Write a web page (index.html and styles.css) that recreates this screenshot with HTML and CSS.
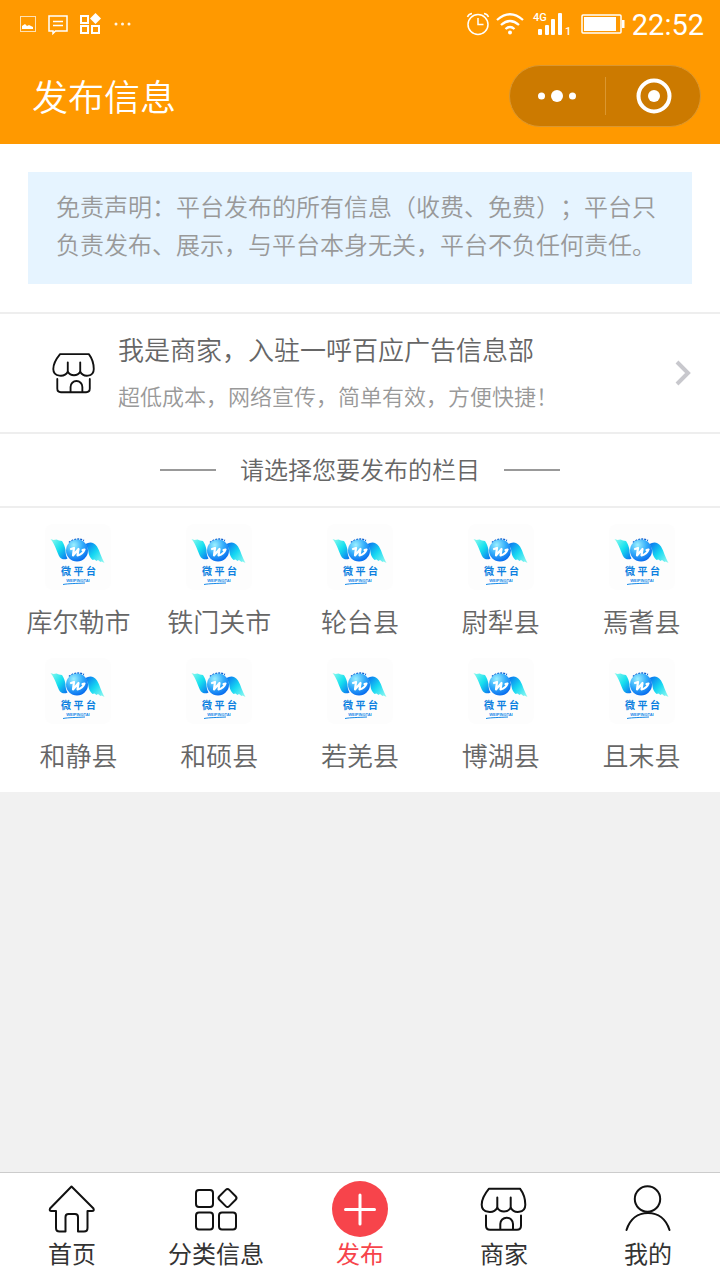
FILE: index.html
```html
<!DOCTYPE html>
<html lang="zh-CN">
  <head>
    <meta charset="UTF-8" />
    <meta name="viewport" content="width=device-width, initial-scale=1" />
    <title>发布信息</title>
    <link rel="stylesheet" href="styles.css">
  </head>
  <body>
    <svg class="sprite" width="0" height="0" aria-hidden="true">
      <defs>
        <radialGradient id="ball" cx="0.35" cy="0.25" r="0.8">
          <stop offset="0" stop-color="#9cf0ff" />
          <stop offset="0.5" stop-color="#35aefb" />
          <stop offset="1" stop-color="#0468ee" />
        </radialGradient>
        <linearGradient id="wing-left" x1="0" y1="0" x2="1" y2="1">
          <stop offset="0" stop-color="#8ffbee" />
          <stop offset="0.5" stop-color="#16e0ee" />
          <stop offset="1" stop-color="#0a6cf0" />
        </linearGradient>
        <linearGradient id="wing-right" x1="0" y1="0" x2="1" y2="1">
          <stop offset="0" stop-color="#0a6cf0" />
          <stop offset="0.5" stop-color="#16d8f2" />
          <stop offset="1" stop-color="#9cfbf0" />
        </linearGradient>
      </defs>
      <symbol id="logo" viewBox="0 0 66 66">
        <path fill="url(#wing-left)" d="M5.500 15l3 1 3-.5 2.500 1 3 .5c2 3 3 6 3.500 9 0 3 .5 6 2 8.500-2.500 1.500-5.500 1-7.500-1C12 29 10.500 21 5.500 15z" />
        <path fill="url(#wing-right)" d="M40.500 20c4-2.500 8.500-2 11.500 2.500 3 5 4 10.500 7.500 16.500l-3-1.500-1 .5-2.500-2-1.500 1-2-1.500-2 .5c-3.500-3-4-7-4.500-11z" />
        <path fill="none" stroke="#0b5fd0" stroke-width="1.500" stroke-dasharray="2 1" d="M24 18.500c4-3.500 10-4.500 15-2" />
        <circle cx="32" cy="26.500" r="11" fill="url(#ball)" />
        <path fill="none" stroke="#fff" stroke-width="2.200" stroke-linecap="round" stroke-linejoin="round" d="M26 25l3-1-1 7.500 5.500-6.500-1 6.500c4-1 6-3 7-6l-2 .5" />
        <text class="logo-name" x="16 28.500 41" y="51">微平台</text>
        <text class="logo-sub" x="33" y="58" text-anchor="middle">WEIPINGTAI</text>
        <path fill="none" stroke="#1689e8" d="M18 60.500c5-1 14-1 22-1.500" />
      </symbol>
      <symbol id="shop" viewBox="0 0 56 56">
        <path d="M13 7.700h31c3 4 5.300 9 5.300 16 0 9-11.500 9-14.600 3-3 5-10.400 5-13.400 0-3.100 6-15.600 6-15.600-3 0-7 4-12 7.300-16z" />
        <path d="M21.300 16.500v10M34.700 16.500v10M10 34.500v10.200q0 4 4 4h27q4 0 4-4V34.500M24.300 48.500V43a6.300 6.300 0 0 1 12.700 0v5.500" />
      </symbol>
    </svg>

    <header class="header">
      <div class="status">
        <svg class="status-icon" width="18" height="24" viewBox="0 0 18 24">
          <rect x="2.500" y="4.500" width="15" height="15" fill="none" stroke="#fff" stroke-opacity="0.7" />
          <path fill="#fff" d="M4 17v-3l3-2 2 2 2-1 4 2v2z" />
        </svg>
        <svg class="status-icon" width="20" height="24" viewBox="0 0 20 24">
          <path fill="none" stroke="#fff" stroke-width="1.500" d="M1 4h18v15H7.500L5 21.500V19H1zM5 9.500h10M5 13.500h10" />
        </svg>
        <svg class="status-icon" width="22" height="24" viewBox="0 0 22 24">
          <path fill="none" stroke="#fff" stroke-width="2" d="M1 4h7v7H1zM1 14h7v7H1zM12 14h7v7h-7z" />
          <path fill="#fff" d="M15.500 1l5.500 5.500-5.500 5.500L10 6.500z" />
        </svg>
        <svg class="status-icon" width="18" height="24" viewBox="0 0 18 24">
          <g fill="#fff" fill-opacity="0.9">
            <circle cx="2" cy="12" r="1.500" />
            <circle cx="8.500" cy="12" r="1.500" />
            <circle cx="15" cy="12" r="1.500" />
          </g>
        </svg>

        <div class="status-right">
          <svg width="24" height="24" viewBox="0 0 24 24" fill="none" stroke="#fff" stroke-width="1.500">
            <circle cx="12" cy="12.500" r="10" />
            <path d="M12 6v6.500h5.500M1.500 5q1-3 4.500-3.500M22.500 5q-1-3-4.500-3.500" />
          </svg>
          <svg width="28" height="24" viewBox="0 0 28 24" fill="none" stroke="#fff" stroke-width="2.300">
            <path d="M1 8q13-11.500 26 0M5 13q9-8 18 0M9.500 17q4.500-4 9 0" />
            <circle cx="14" cy="20.500" r="2" fill="#fff" stroke="none" />
          </svg>
          <svg class="signal" width="40" height="24" viewBox="0 0 40 24" fill="#fff">
            <text x="1" y="9">4G</text>
            <rect x="6" y="17" width="4" height="6" rx="1" />
            <rect x="13" y="13" width="4" height="10" rx="1" />
            <rect x="19" y="7" width="4" height="16" rx="1" />
            <rect x="26" y="1" width="4" height="22" rx="1" />
            <text x="33" y="23">1</text>
          </svg>
          <svg width="44" height="24" viewBox="0 0 44 24">
            <rect x="2" y="3" width="39" height="18" rx="1" fill="none" stroke="#fff" stroke-width="1.500" />
            <path fill="#fff" d="M4 5h32v14H4zM42 8h2.500v8H42z" />
          </svg>
          <span class="time">22:52</span>
        </div>
      </div>

      <div class="titlebar">
        <h1>发布信息</h1>
        <div class="capsule">
          <button type="button" aria-label="更多">
            <svg width="40" height="40" viewBox="0 0 40 40" fill="#fff">
              <circle cx="4.500" cy="20" r="3.500" />
              <circle cx="20" cy="20" r="6" />
              <circle cx="35.500" cy="20" r="3.500" />
            </svg>
          </button>
          <button type="button" aria-label="关闭">
            <svg width="40" height="40" viewBox="0 0 40 40" fill="#fff">
              <circle cx="21" cy="20" r="15.500" fill="none" stroke="#fff" stroke-width="4" />
              <circle cx="21" cy="20" r="6" />
            </svg>
          </button>
        </div>
      </div>
    </header>

    <main>
      <p class="notice">免责声明：平台发布的所有信息（收费、免费）；平台只负责发布、展示，与平台本身无关，平台不负任何责任。</p>

      <a class="merchant" href="#join">
        <svg class="line-icon" width="52" height="52"><use href="#shop" /></svg>
        <span class="merchant-text">
          <span class="merchant-title">我是商家，入驻一呼百应广告信息部</span>
          <span class="merchant-sub">超低成本，网络宣传，简单有效，方便快捷！</span>
        </span>
        <svg class="chevron" width="16" height="26" viewBox="0 0 16 26">
          <path d="M2 2l11 11L2 24" />
        </svg>
      </a>

      <h2 class="choose">请选择您要发布的栏目</h2>

      <nav class="areas">
        <a href="#korla"><svg class="logo"><use href="#logo" /></svg>库尔勒市</a>
        <a href="#tiemenguan"><svg class="logo"><use href="#logo" /></svg>铁门关市</a>
        <a href="#luntai"><svg class="logo"><use href="#logo" /></svg>轮台县</a>
        <a href="#yuli"><svg class="logo"><use href="#logo" /></svg>尉犁县</a>
        <a href="#yanqi"><svg class="logo"><use href="#logo" /></svg>焉耆县</a>
        <a href="#hejing"><svg class="logo"><use href="#logo" /></svg>和静县</a>
        <a href="#heshuo"><svg class="logo"><use href="#logo" /></svg>和硕县</a>
        <a href="#ruoqiang"><svg class="logo"><use href="#logo" /></svg>若羌县</a>
        <a href="#bohu"><svg class="logo"><use href="#logo" /></svg>博湖县</a>
        <a href="#qiemo"><svg class="logo"><use href="#logo" /></svg>且末县</a>
      </nav>
    </main>

    <nav class="tabbar">
      <a href="#home">
        <svg class="line-icon" width="56" height="56" viewBox="0 0 56 56">
          <path d="M27.500 5.500L6 27.500q-1 2.500 1.500 2.500H12v17q0 3.500 3.500 3.500h6V36q0-3 3-3h6.500q3 0 3 3v14.500h6q3.500 0 3.500-3.500V30h4.500q2.500 0 1.500-2.500z" />
        </svg>
        首页
      </a>
      <a href="#category">
        <svg class="line-icon" width="56" height="56" viewBox="0 0 56 56">
          <rect x="8" y="9" width="17" height="17" rx="3" />
          <rect x="8" y="31.500" width="17" height="17" rx="3" />
          <rect x="31" y="31.500" width="17" height="17" rx="3" />
          <rect x="32.500" y="10" width="14" height="14" rx="2.500" transform="rotate(45 39.500 17)" />
        </svg>
        分类信息
      </a>
      <a class="active" href="#publish">
        <svg width="56" height="56" viewBox="0 0 56 56">
          <circle cx="28" cy="28" r="28" fill="#f7444b" />
          <path stroke="#fff" stroke-width="3" stroke-linecap="round" d="M28 14v29M13.500 28.500h29" />
        </svg>
        发布
      </a>
      <a href="#shops">
        <svg class="line-icon" width="56" height="56"><use href="#shop" /></svg>
        商家
      </a>
      <a href="#me">
        <svg class="line-icon" width="56" height="56" viewBox="0 0 56 56">
          <circle cx="27.500" cy="18" r="12.700" />
          <path d="M6.500 49C10 38 18 32 28 32s18 6 21.500 17" />
        </svg>
        我的
      </a>
    </nav>
  </body>
</html>
```

FILE: styles.css
```css
:root {
  --orange: #ff9900;
  --line: #eee;
}

* {
  box-sizing: border-box;
}

body {
  margin: 0;
  min-height: 100vh;
  display: flex;
  flex-direction: column;
  background: #f1f1f1;
  color: #666;
  font-family: "Noto Sans CJK SC", sans-serif;
  font-weight: 350;
  text-spacing-trim: space-all;
}

a {
  color: inherit;
  text-decoration: none;
}

svg {
  flex: none;
  display: block;
  overflow: visible;
}

.sprite {
  position: absolute;
}

/* header */
.header {
  background: var(--orange);
  color: #fff;
}

.status {
  height: 48px;
  padding: 0 16px 0 18px;
  display: flex;
  align-items: center;
  gap: 12px;
}

.status-right {
  margin-left: auto;
  display: flex;
  align-items: center;
  gap: 8px;
}

.status-right svg:first-child {
  margin-right: -2px;
}

.signal {
  font: 500 11px Roboto, sans-serif;
}

.time {
  font: 400 29px/48px Roboto, sans-serif;
  padding-top: 2px;
}

.titlebar {
  height: 96px;
  padding: 0 19px 0 32px;
  display: flex;
  align-items: center;
  justify-content: space-between;
}

h1 {
  margin: 0;
  padding-bottom: 2px;
  font-size: 36px;
  font-weight: 350;
}

.capsule {
  display: flex;
  align-items: center;
  width: 192px;
  height: 62px;
  background: #cc7a00;
  border: 1px solid #db972f;
  border-radius: 31px;
}

.capsule button {
  flex: 1;
  height: 38px;
  padding: 0;
  display: flex;
  align-items: center;
  justify-content: center;
  background: none;
  border: 0;
}

.capsule button + button {
  border-left: 1px solid #db972f;
}

/* content */
main {
  background: #fff;
}

.notice {
  margin: 28px;
  padding: 15px 28px 21px;
  background: #e6f4ff;
  color: #999;
  font-size: 24px;
  line-height: 38px;
}

.merchant {
  display: flex;
  align-items: center;
  gap: 18px;
  padding: 12px 29px 12px 48px;
  border-top: 2px solid var(--line);
  border-bottom: 2px solid var(--line);
}

.merchant-text {
  flex: 1;
  display: flex;
  flex-direction: column;
  padding-bottom: 2px;
}

.merchant-title {
  font-size: 26px;
  line-height: 46px;
}

.merchant-sub {
  color: #999;
  font-size: 22px;
  line-height: 46px;
}

.line-icon {
  fill: none;
  stroke: #111;
  stroke-width: 2;
  stroke-linecap: round;
  stroke-linejoin: round;
}

.chevron path {
  fill: none;
  stroke: #c8c8cd;
  stroke-width: 4;
}

.choose {
  margin: 0;
  display: flex;
  align-items: center;
  justify-content: center;
  gap: 24px;
  border-bottom: 2px solid var(--line);
  font-size: 24px;
  font-weight: 350;
  line-height: 70px;
  padding-bottom: 2px;
}

.choose::before,
.choose::after {
  content: "";
  width: 56px;
  height: 2px;
  margin-top: 2px;
  background: #999;
}

.areas {
  display: grid;
  grid-template-columns: repeat(5, 1fr);
  padding: 16px 8px 0;
}

.areas a {
  display: flex;
  flex-direction: column;
  align-items: center;
  gap: 11px;
  padding-bottom: 17px;
  font-size: 26px;
  line-height: 40px;
}

.logo {
  width: 66px;
  height: 66px;
  background: #fdfdfd;
  border-radius: 8px;
}

.logo-name {
  font: 700 10px "Noto Sans CJK SC", sans-serif;
  fill: #0b7fe0;
}

.logo-sub {
  font: 700 4px "Liberation Sans", sans-serif;
  fill: #1689e8;
}

/* bottom tabs */
.tabbar {
  margin-top: auto;
  display: flex;
  padding: 8px 0 11px;
  background: #fff;
  border-top: 1px solid #ccc;
  color: #333;
}

.tabbar a {
  flex: 1;
  display: flex;
  flex-direction: column;
  align-items: center;
  font-size: 24px;
  font-weight: 400;
  line-height: 32px;
}

.tabbar .active {
  color: #f7444b;
}
```
